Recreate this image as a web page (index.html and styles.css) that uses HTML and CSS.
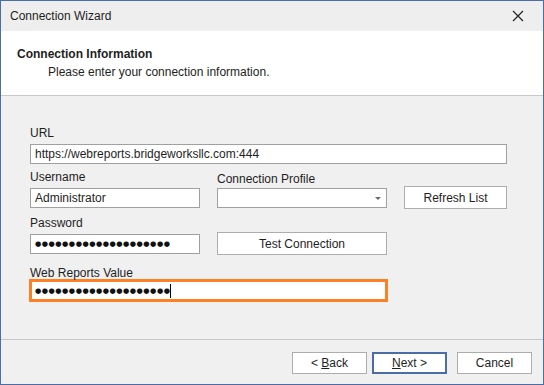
FILE: index.html
```html
<!DOCTYPE html>
<html lang="en">

<head>
  <meta charset="UTF-8" />
  <title>Connection Wizard</title>
  <link rel="stylesheet" href="styles.css">
</head>

<body>
  <div class="window">
    <div class="titlebar">
      <span>Connection Wizard</span>
      <svg class="close" width="12" height="12" viewBox="0 0 12 12">
        <path d="M1 1 L11 11 M11 1 L1 11" stroke="#222" stroke-width="1.2" fill="none" />
      </svg>
    </div>

    <div class="header">
      <div class="header-title">Connection Information</div>
      <div class="header-sub">Please enter your connection information.</div>
    </div>

    <div class="content">
      <div class="row">
        <div class="field wide">
          <div class="label">URL</div>
          <div class="box">https://webreports.bridgeworksllc.com:444</div>
        </div>
      </div>

      <div class="row">
        <div class="field">
          <div class="label">Username</div>
          <div class="box">Administrator</div>
        </div>
        <div class="field">
          <div class="label label-low">Connection Profile</div>
          <div class="box combo"><span class="arrow"></span></div>
        </div>
        <div class="side">
          <button class="btn btn-refresh">Refresh List</button>
        </div>
      </div>

      <div class="row row-pass">
        <div class="field">
          <div class="label">Password</div>
          <div class="box dots">●●●●●●●●●●●●●●●●●●●●</div>
        </div>
        <div class="field">
          <button class="btn btn-test">Test Connection</button>
        </div>
      </div>

      <div class="row row-web">
        <div class="field double">
          <div class="label">Web Reports Value</div>
          <div class="box dots focused">●●●●●●●●●●●●●●●●●●●●<span class="caret"></span></div>
        </div>
      </div>
    </div>

    <div class="footer">
      <button class="btn btn-foot">&lt; <u>B</u>ack</button>
      <button class="btn btn-foot btn-default"><u>N</u>ext &gt;</button>
      <button class="btn btn-foot btn-cancel">Cancel</button>
    </div>
  </div>
</body>

</html>
```

FILE: styles.css
```css
body {
  margin: 0;
  font-family: 'Liberation Sans', Arial, sans-serif;
  font-size: 12px;
  color: #1e1e1e;
}

.window {
  width: 544px;
  height: 385px;
  box-sizing: border-box;
  border: 1px solid #4a6da7;
  background-color: #f0f0f0;
  display: flex;
  flex-direction: column;
}

.titlebar {
  height: 30px;
  display: flex;
  align-items: center;
  justify-content: space-between;
  padding: 0 19px 0 9px;
  background-color: #eeeeee;
}

.header {
  height: 64px;
  background-color: #fff;
  border-bottom: 1px solid #c8c8c8;
  box-sizing: content-box;
}

.header-title {
  font-weight: 700;
  font-size: 12px;
  padding: 15px 0 0 16px;
  line-height: 16px;
}

.header-sub {
  padding: 2px 0 0 47px;
  line-height: 16px;
}

.content {
  flex: 1;
  padding: 29px 0 0 29px;
  border-bottom: 1px solid #c8c8c8;
}

.row {
  display: flex;
  gap: 17px;
  margin-bottom: 5px;
  align-items: flex-start;
}

.row-pass {
  margin-top: 6px;
}

.row-web {
  margin-top: 10px;
}

.field {
  width: 170px;
}

.field.wide {
  width: 477px;
}

.field.double {
  width: 357px;
}

.label {
  line-height: 16px;
  margin-bottom: 3px;
}

.label-low {
  position: relative;
  top: 2px;
}

.box {
  height: 20px;
  box-sizing: border-box;
  border: 1px solid #a0a0a0;
  background-color: #fff;
  padding: 0 4px;
  line-height: 18px;
  white-space: nowrap;
  overflow: hidden;
}

.combo {
  position: relative;
}

.arrow {
  position: absolute;
  right: 5px;
  top: 8px;
  border-left: 3px solid transparent;
  border-right: 3px solid transparent;
  border-top: 3px solid #6d6d6d;
}

.dots {
  font-family: 'DejaVu Sans', sans-serif;
  font-size: 7.2px;
  letter-spacing: 0.5px;
  padding-left: 4px;
  color: #111;
}

.focused {
  height: 23px;
  border: 3px solid #ff7f27;
  margin: -5px 0 0 -1px;
  width: 359px;
  line-height: 17px;
  padding-left: 3px;
}

.caret {
  display: inline-block;
  width: 1px;
  height: 14px;
  background-color: #000;
  vertical-align: middle;
  margin-left: 0;
}

.btn {
  font-family: inherit;
  font-size: 12px;
  color: #1e1e1e;
  background-color: #fff;
  border: 1px solid #adadad;
  padding: 0;
  box-sizing: border-box;
}

.side {
  padding-top: 17px;
}

.btn-refresh {
  width: 103px;
  height: 23px;
}

.btn-test {
  width: 170px;
  height: 23px;
  margin-top: 17px;
}

.footer {
  height: 44px;
  display: flex;
  align-items: flex-start;
  justify-content: flex-end;
  padding: 12px 11px 0 0;
  box-sizing: border-box;
}

.btn-foot {
  width: 75px;
  height: 22px;
  margin-left: 5px;
}

.btn-default {
  border: 2px solid #4a6da7;
}

.btn-cancel {
  margin-left: 10px;
}
```
